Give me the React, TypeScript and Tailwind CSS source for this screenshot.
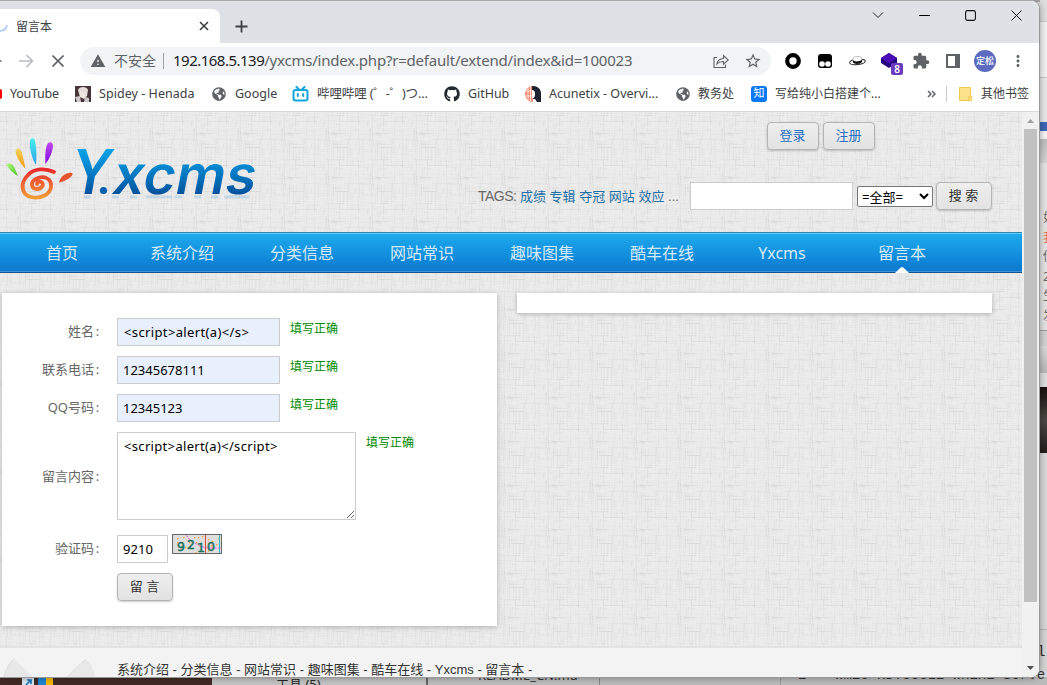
import type { ReactNode } from "react";
import { FaGithub, FaGlobeAmericas } from "react-icons/fa";
import { MdExtension, MdStarBorder, MdWarning, MdMoreVert } from "react-icons/md";

function seeded(seed: number) {
  let s = seed;
  return () => {
    s = (s * 16807) % 2147483647;
    return s / 2147483647;
  };
}

const rand = seeded(4711);
const threads = Array.from({ length: 130 }, (_, i) => {
  const vertical = i % 2 === 0;
  const len = 5 + Math.floor(rand() * 18);
  return {
    x: Math.floor(rand() * 44),
    y: Math.floor(rand() * 44),
    w: vertical ? 1 : len,
    h: vertical ? len : 1,
    fill: rand() > 0.45 ? "#ffffff" : "#b0b0b0",
    o: 0.05 + rand() * 0.09,
  };
});

function Linen() {
  return (
    <svg className="absolute inset-0 h-full w-full" aria-hidden="true">
      <defs>
        <pattern id="linen" width="44" height="44" patternUnits="userSpaceOnUse" x="16">
          <rect width="44" height="44" fill="#eaeaea" />
          {threads.map((t, i) => (
            <g key={i} fill={t.fill} opacity={t.o}>
              <rect x={t.x} y={t.y} width={t.w} height={t.h} />
              <rect x={t.x - 44} y={t.y} width={t.w} height={t.h} />
              <rect x={t.x} y={t.y - 44} width={t.w} height={t.h} />
            </g>
          ))}
        </pattern>
      </defs>
      <rect width="100%" height="100%" fill="url(#linen)" />
    </svg>
  );
}

function TabStrip() {
  return (
    <div className="flex h-[42px] shrink-0 items-end bg-[#dee1e6]">
      <div className="flex h-[34px] w-[220px] items-center rounded-tr-lg bg-white">
        <svg className="h-5 w-[16px]" viewBox="0 0 16 20" fill="none">
          <path d="M7 9c-.6 3.500-3 5.800-7 6" stroke="#a9c8fa" strokeWidth="1.600" />
        </svg>
        <span className="pt-px text-[12px] text-[#3c4043]">留言本</span>
        <svg className="ml-auto mr-[11px] h-[10px] w-[10px]" viewBox="0 0 10 10">
          <path d="M1 1l8 8M9 1l-8 8" stroke="#3c4043" strokeWidth="1.600" />
        </svg>
      </div>
      <svg className="mb-[10px] ml-[15px] h-[13px] w-[13px]" viewBox="0 0 13 13">
        <path d="M6.500 .5v12M.5 6.500h12" stroke="#3c4043" strokeWidth="1.800" />
      </svg>
      <div className="ml-auto mb-[22px] flex items-center gap-[35px] pr-[17px]">
        <svg className="h-3 w-3" viewBox="0 0 12 12" fill="none" stroke="#222">
          <path d="M1 3.500l5 5 5-5" />
        </svg>
        <svg className="h-3 w-[11px]" viewBox="0 0 11 12" stroke="#000">
          <path d="M0 6.500h11" />
        </svg>
        <svg className="h-[11px] w-[11px]" viewBox="0 0 11 11" fill="none" stroke="#111" strokeWidth="1.100">
          <rect x=".6" y=".6" width="9.800" height="9.800" rx="1.800" />
        </svg>
        <svg className="h-[11px] w-[11px]" viewBox="0 0 11 11" stroke="#111">
          <path d="M.5 .5l10 10M10.500 .5l-10 10" />
        </svg>
      </div>
    </div>
  );
}

function Toolbar() {
  return (
    <div className="flex h-[36px] shrink-0 items-center bg-white">
      <svg className="h-4 w-[35px]" viewBox="0 0 35 16" fill="none" strokeWidth="1.600">
        <path d="M0 8h1.500" stroke="#5f6368" />
        <path d="M19 8h13M26.500 2l6 6-6 6" stroke="#babcbe" />
      </svg>
      <svg className="ml-[17px] h-3 w-3" viewBox="0 0 12 12" stroke="#5f6368" strokeWidth="1.600">
        <path d="M.5 .5l11 11M11.500 .5l-11 11" />
      </svg>
      <div className="ml-[16px] flex h-[28px] w-[691px] items-center rounded-full bg-[#f1f3f4] pl-[10px] pr-[9px] text-[14px] whitespace-nowrap">
        <MdWarning className="h-4 w-4 shrink-0 text-[#5f6368]" />
        <span className="ml-[8px] pb-[2px] text-[#5f6368]">不安全</span>
        <span className="mx-[7px] h-4 w-px bg-[#9aa0a6]" />
        <span className="ml-[2px] pb-[2px] text-[15px] tracking-[-0.210px] text-[#5f6368]">
          <span className="tracking-[-0.510px] text-[#202124]">192.168.5.139</span>/yxcms/index.php?r=default/extend/index&amp;id=100023
        </span>
        <svg className="ml-auto h-4 w-4 shrink-0" viewBox="0 0 16 16" fill="none" stroke="#5f6368" strokeWidth="1.100">
          <path d="M4 4.500H1v10h11.500v-3" />
          <path d="M4 11c.3-3.500 3-5.300 6.500-5.500V2.500L15.300 7l-4.800 4.200V8.500C8 8.400 5.700 9 4 11z" />
        </svg>
        <MdStarBorder className="ml-[15px] h-[18px] w-[18px] shrink-0 text-[#5f6368]" />
      </div>
      <div className="flex flex-1 items-center">
        <svg className="ml-[14px] h-4 w-4" viewBox="0 0 16 16">
          <circle cx="8" cy="8" r="5.800" fill="none" stroke="#000" strokeWidth="4.200" />
        </svg>
        <svg className="ml-[16px] h-4 w-4" viewBox="0 0 16 16">
          <rect x="1" y="1" width="14" height="14" rx="3" fill="#000" />
          <circle cx="5" cy="11" r="2.800" fill="#fff" />
          <circle cx="11" cy="11" r="2.800" fill="#fff" />
        </svg>
        <svg className="ml-[16px] h-4 w-[17px]" viewBox="0 0 17 16">
          <ellipse cx="8.500" cy="9" rx="7.800" ry="2.600" fill="#fff" stroke="#222" transform="rotate(-6 8 9)" />
          <path d="M4 9V5c1-2 7-2 8.500-.5l.5 4C11 11 6 11 4 9z" fill="#fff" stroke="#999" strokeWidth=".6" />
          <path d="M4 7.500c3 1.500 6 1 9-.6v2.200C11 11.500 6 11.500 4 9.500z" fill="#111" />
        </svg>
        <div className="relative ml-[14px] h-5 w-[22px]">
          <svg className="h-5 w-[18px]" viewBox="0 0 18 20">
            <path d="M9 2l8 5v5l-8 5-8-5V7z" fill="#280680" />
            <path d="M9 2l8 5-8 5.500L1 7z" fill="#4b0db5" />
          </svg>
          <span className="absolute left-[11px] top-[12px] h-[12px] w-[12px] rounded-[2px] bg-[#6c3bc0] text-center text-[10px] font-semibold leading-[12px] text-white">8</span>
        </div>
        <MdExtension className="ml-[10px] h-[18px] w-[18px] text-[#5f6368]" />
        <svg className="ml-[16px] h-[14px] w-[14px]" viewBox="0 0 14 14">
          <path d="M1 1h12v12H1zM10 1v12" fill="none" stroke="#5f6368" strokeWidth="2" />
          <rect x="9" y="1" width="4" height="12" fill="#5f6368" />
        </svg>
        <span className="ml-[14px] flex h-[22px] w-[22px] items-center justify-center rounded-full bg-[#5c6bc0] text-[9px] font-medium text-white">定松</span>
        <MdMoreVert className="ml-[13px] h-[18px] w-[18px] text-[#5f6368]" />
      </div>
    </div>
  );
}

function Mark({ icon, className, children }: { icon: ReactNode; className: string; children: ReactNode }) {
  return (
    <div className={"flex shrink-0 items-center overflow-hidden whitespace-nowrap " + className}>
      {icon}
      {children}
    </div>
  );
}

function Bookmarks() {
  return (
    <div className="flex h-[33px] shrink-0 items-center border-b border-[#d8dadd] bg-white pb-[3px] text-[12.500px] text-[#3c4043]">
      <Mark className="w-[74px]" icon={<span className="mr-[8px] h-[10px] w-[2px] rounded-r bg-[#f00]" />}>
        <span className="pt-px tracking-[-0.250px]">YouTube</span>
      </Mark>
      <Mark
        className="w-[136px]"
        icon={
          <svg className="ml-px mr-[8px] h-4 w-4" viewBox="0 0 16 16">
            <rect width="16" height="16" fill="#49343c" />
            <path d="M3 4c1-4 9-4 10 0l-1 6-3 3-4-2z" fill="#e6dedb" />
            <path d="M0 11l5-1 1 6H2zM10 11l4 1v4H9z" fill="#cfcaca" />
            <path d="M5 5l2 3 1-3 1 4 2-3v4l-3 2-3-2z" fill="#f6e9df" />
          </svg>
        }
      >
        <span className="pt-px tracking-[0.050px]">Spidey - Henada</span>
      </Mark>
      <Mark className="w-[82px]" icon={<FaGlobeAmericas className="ml-[2px] mr-[9px] h-[14px] w-[14px] text-[#5f6368]" />}>
        <span className="pt-px">Google</span>
      </Mark>
      <Mark
        className="w-[152px]"
        icon={
          <svg className="mr-[8px] h-4 w-[17px]" viewBox="0 0 17 16" fill="none" stroke="#12a5dc" strokeWidth="2">
            <rect x="1.500" y="4" width="14" height="10.500" rx="2" />
            <path d="M4.500 1l2.500 2.500M12.500 1L10 3.500M5.800 8v2M11.200 8v2" strokeLinecap="round" />
          </svg>
        }
      >
        <span className="pt-px tracking-[-0.120px]">哔哩哔哩 (゜-゜)つ...</span>
      </Mark>
      <Mark className="w-[81px]" icon={<FaGithub className="mr-[8px] h-4 w-4 text-[#24292f]" />}>
        <span className="pt-px tracking-[-0.050px]">GitHub</span>
      </Mark>
      <Mark
        className="w-[150px]"
        icon={
          <svg className="mr-[8px] h-4 w-4" viewBox="0 0 16 16">
            <path d="M8 0a8 8 0 0 0 0 16z" fill="#f58a74" />
            <path d="M3 2v12M5.500 1v14M0 5h8M0 10h8" stroke="#fff" strokeWidth=".7" />
            <path d="M7 0c5-.5 9 3 9 7v9h-4l-2-3H7V9c2-1 2-4 0-5z" fill="#1f2230" />
            <path d="M7 4c2 0 3 1 3 4s-1 4-3 5z" fill="#fff" />
          </svg>
        }
      >
        <span className="pt-px">Acunetix - Overvi...</span>
      </Mark>
      <Mark className="w-[75px]" icon={<FaGlobeAmericas className="ml-px mr-[8px] h-[14px] w-[14px] text-[#5f6368]" />}>
        <span className="pt-px text-[12px]">教务处</span>
      </Mark>
      <Mark
        className="w-[170px]"
        icon={<span className="ml-px mr-[8px] flex h-4 w-4 items-center justify-center rounded-[3px] bg-[#0a78f5] text-[11px] text-white">知</span>}
      >
        <span className="pt-px text-[12px]">写给纯小白搭建个...</span>
      </Mark>
      <svg className="ml-[7px] h-[8px] w-[9px]" viewBox="0 0 9 8" fill="none" stroke="#5f6368" strokeWidth="1.500">
        <path d="M1 1l3 3-3 3M5 1l3 3-3 3" />
      </svg>
      <span className="ml-[10px] h-4 w-px bg-[#ccc]" />
      <svg className="ml-[12px] mr-[9px] h-[14px] w-[13px]" viewBox="0 0 13 14">
        <path d="M.5 .5h11v9h1v4H.5z" fill="#fde18b" stroke="#eec951" />
        <path d="M9.500 13v-3h2" fill="none" stroke="#eec951" />
      </svg>
      <span className="pt-px text-[12px]">其他书签</span>
    </div>
  );
}

function Logo() {
  return (
    <svg className="h-[70px] w-[258px]" viewBox="0 135 258 70">
      <defs>
        <linearGradient id="ink" gradientUnits="userSpaceOnUse" x1="0" y1="-45" x2="0" y2="1">
          <stop offset="0" stopColor="#0aa2e8" />
          <stop offset=".3" stopColor="#068ed6" />
          <stop offset="1" stopColor="#04509c" />
        </linearGradient>
        <linearGradient id="palm" x1="0" y1="0" x2="0" y2="1">
          <stop offset="0" stopColor="#ea2a2c" />
          <stop offset="1" stopColor="#f39a35" />
        </linearGradient>
        <linearGradient id="f1" x1="0" y1="0" x2="1" y2="1"><stop stopColor="#b5f47c" /><stop offset="1" stopColor="#45c91f" /></linearGradient>
        <linearGradient id="f2" x1="0" y1="0" x2="0" y2="1"><stop stopColor="#f8d15c" /><stop offset="1" stopColor="#f09a09" /></linearGradient>
        <linearGradient id="f3" x1="0" y1="0" x2="0" y2="1"><stop stopColor="#44f0e8" /><stop offset="1" stopColor="#2e9df3" /></linearGradient>
        <linearGradient id="f4" x1="0" y1="0" x2="0" y2="1"><stop stopColor="#c14af0" /><stop offset="1" stopColor="#7a08e0" /></linearGradient>
      </defs>
      <path d="M7 164c2-2 6 0 7 3l4 9c-4-2-12-9-11-12z" fill="url(#f1)" />
      <path d="M16 150c2-3 5-1 6 3l3.500 15.500C22 166 14 154 16 150z" fill="url(#f2)" />
      <path d="M30 141c1-4 5-3 5 0 1.500 7 2 14 1 24-4-6-7-18-6-24z" fill="url(#f3)" />
      <path d="M48 143c3-2 5 0 5 3-.5 6-3 12-7.500 18-.5-8-.5-16 2.500-21z" fill="url(#f4)" />
      <path d="M59 182.500c1-6 8-11 13-9.500 2 1-1 4-4 6-3 1.800-6 3-9 3.500z" fill="#e5532c" />
      <path
        d="M54 172c-8-4-20-4-26 3-9 9-6 20 3 22 9 2 19-2 20-10 1-9-8-12-15-8-6 3-5 10 1 10 5 0 8-5 4-7-2-1-4 0-4 2"
        fill="none" stroke="url(#palm)" strokeWidth="3.800" strokeLinecap="round"
      />
      <g fill="url(#ink)" fontFamily="Inter, sans-serif" fontWeight="600">
        <text fontSize="62" textLength="40" lengthAdjust="spacingAndGlyphs" transform="translate(68 194) skewX(-10)">Y</text>
        <text fontSize="54" textLength="143" lengthAdjust="spacingAndGlyphs" transform="translate(110.500 194) skewX(-11)">xcms</text>
      </g>
      <circle cx="103.500" cy="190.500" r="3.600" fill="#0561ad" />
      <path d="M84 197h7M112 197h7M130 197h7M146 197h26M175 197h7M194 197h7M211 197h7M224 197h25" stroke="#4b9bd6" strokeWidth="3" opacity=".22" />
    </svg>
  );
}

const button =
  "flex h-[28px] items-center justify-center rounded-[4px] border border-[#b4b4b4] bg-linear-to-b from-[#eeeeee] to-[#e2e2e2] pr-px text-[13px] shadow-[0_1px_2px_rgba(0,0,0,0.2)]";

function Header() {
  return (
    <header className="flex h-[120px] justify-between">
      <div className="pt-[23px]">
        <Logo />
      </div>
      <div className="flex flex-col pt-[10px]">
        <div className="ml-[289px] flex gap-[4px]">
          <button className={button + " w-[52px] text-[#2470c4]"}>登录</button>
          <button className={button + " w-[52px] text-[#2470c4]"}>注册</button>
        </div>
        <div className="mt-[32px] flex w-[544px] items-center whitespace-nowrap">
          <p className="w-[212px] font-['Liberation_Sans','Noto_Sans_CJK_SC',sans-serif] text-[13px] text-[#666]">
            <span className="inline-block w-[42px] text-[14px] tracking-[-0.500px]">TAGS:</span>
            <span className="text-[#1d6fa5]">成绩 专辑 夺冠 网站 效应</span> ...
          </p>
          <input className="h-[28px] w-[163px] border border-[#ccc] bg-white" aria-label="关键词" />
          <select className="ml-[4px] h-[21px] w-[76px] rounded-[2px] border border-[#767676] bg-white pb-[2px] text-[13px] leading-none text-black">
            <option>=全部=</option>
          </select>
          <button className={button + " ml-[3px] w-[56px] text-[#333]"}>搜 索</button>
        </div>
      </div>
    </header>
  );
}

const channels = ["首页", "系统介绍", "分类信息", "网站常识", "趣味图集", "酷车在线", "Yxcms", "留言本"];

function Nav() {
  return (
    <nav className="flex h-[41px] border-y border-t-[#2b86b5] border-b-[#17548a] bg-linear-to-b from-[#1eabee] to-[#0d78cf] pl-[2px] text-[16px] text-[#d3ebf8] shadow-[inset_0_1px_0_#67c9f5,inset_0_-1px_0_#3e92d6]">
      {channels.map((c) => (
        <a key={c} className="flex w-[120px] flex-col items-center">
          <span className="leading-[40px]">{c}</span>
          {c === "留言本" && (
            <svg className="-mt-[6px] h-[6px] w-[14px] shrink-0" viewBox="0 0 14 6">
              <path d="M0 6L6 .3h2L14 6z" fill="#fff" />
            </svg>
          )}
        </a>
      ))}
    </nav>
  );
}

function Row({ label, className, children }: { label: string; className: string; children: ReactNode }) {
  return (
    <div className={"flex " + className}>
      <span className="w-[99px] text-right text-[13px] leading-[26px] text-[#666]">
        {label}
        <span className="inline-block w-[7px] text-center">:</span>
      </span>
      <div className="ml-[16px] flex">{children}</div>
    </div>
  );
}

const field = "h-[28px] border border-[#ccc] px-[5px] text-[13px] text-black";

function Correct() {
  return <span className="ml-[10px] pt-px text-[12px] leading-[20px] text-[#008a00]">填写正确</span>;
}

function Captcha() {
  return (
    <svg className="ml-[4px] -mt-px h-[20px] w-[50px]" viewBox="0 0 50 20">
      <rect x=".5" y=".5" width="49" height="19" fill="#dedede" stroke="#666" />
      <path d="M14 1l5 6 9 5 7 2h14" fill="none" stroke="#ef6fe0" strokeDasharray="3 1" />
      <path d="M33.500 1v18" stroke="#e0492c" />
      <path d="M47.500 1v18" stroke="#20bccb" />
      <g fill="#f29b3b">
        {[[5, 4], [11, 3], [10, 8], [22, 3], [26, 3], [30, 2], [24, 8], [36, 5], [40, 7], [44, 10], [39, 11], [13, 13], [46, 4], [23, 18], [36, 16], [17, 8], [5, 8]].map(([x, y]) => (
          <rect key={x + "-" + y} x={x} y={y} width="1.300" height="1.300" />
        ))}
      </g>
      <g fill="#20705c" stroke="#20705c" strokeWidth=".5" fontFamily="DejaVu Sans, sans-serif" fontSize="12.500">
        <text x="5" y="17">9</text>
        <text x="15" y="14.500">2</text>
        <text x="25" y="18">1</text>
        <text x="35" y="17">0</text>
      </g>
    </svg>
  );
}

function Guestbook() {
  return (
    <form className="h-[333px] w-[495px] bg-white pt-[25px] shadow-[0_1px_5px_rgba(0,0,0,0.25)]">
      <Row label="姓名" className="h-[38px]">
        <input className={field + " w-[163px] bg-[#e8f0fe] pl-[6px] tracking-[0.370px]"} defaultValue="<script>alert(a)</s>" />
        <Correct />
      </Row>
      <Row label="联系电话" className="h-[38px]">
        <input className={field + " w-[163px] bg-[#e8f0fe]"} defaultValue="12345678111" />
        <Correct />
      </Row>
      <Row label="QQ号码" className="h-[38px]">
        <input className={field + " w-[163px] bg-[#e8f0fe]"} defaultValue="12345123" />
        <Correct />
      </Row>
      <Row label="留言内容" className="h-[103px] [&>span]:pt-[31px]">
        <textarea
          className="h-[88px] w-[239px] overflow-hidden border border-[#ccc] px-[6px] py-[4px] text-[13px] leading-[18px] tracking-[0.330px] text-black"
          defaultValue="<script>alert(a)</script>"
        />
        <Correct />
      </Row>
      <Row label="验证码" className="h-[38px]">
        <input className={field + " w-[51px] tracking-[0.100px]"} defaultValue="9210" />
        <Captcha />
      </Row>
      <button type="button" className={button + " ml-[115px] w-[56px] text-[#333]"}>留 言</button>
    </form>
  );
}

function Footer() {
  return (
    <footer className="mt-[20px] flex h-[31px] overflow-hidden border-t-2 border-[#e3e3e3] bg-[#f3f3f3]">
      <svg className="h-[29px] w-[117px]" viewBox="0 0 117 29">
        <path d="M4 29c2-8 5-13 10-18l19 18zM67 29l19-18c5 5 8 10 9 18z" fill="#e8e8e8" />
        <path d="M4 29c2-8 5-13 10-18M67 29l19-18" stroke="#ddd" fill="none" />
      </svg>
      <p className="pt-[12px] font-['Liberation_Sans','Noto_Sans_CJK_SC',sans-serif] text-[13px] leading-[20px] whitespace-nowrap text-[#333]">
        系统介绍 - 分类信息 - 网站常识 - 趣味图集 - 酷车在线 - Yxcms - 留言本 -
      </p>
    </footer>
  );
}

function Scrollbar() {
  return (
    <div className="flex w-[17px] flex-col items-center bg-[#f1f1f1]">
      <svg className="h-[17px] w-[17px]" viewBox="0 0 17 17"><path d="M5 11l3.500-4 3.500 4z" fill="#a3a3a3" /></svg>
      <div className="h-[473px] w-[13px] bg-[#c1c1c1]" />
      <svg className="mt-auto mb-px h-[17px] w-[17px]" viewBox="0 0 17 17"><path d="M5 7h7l-3.500 4z" fill="#505050" /></svg>
    </div>
  );
}

function Backdrop() {
  return (
    <div className="absolute inset-0 overflow-hidden bg-[#e2e2e2]">
      <div className="absolute left-0 top-0 flex h-[2px] w-full">
        <div className="w-[24px] bg-[#777]" />
        <div className="w-[28px] bg-[#b9a55a]" />
        <div className="w-[46px] bg-[#7b6d68]" />
        <div className="w-[32px] bg-[#3d83ad]" />
        <div className="w-[380px] bg-[#806860]" />
        <div className="w-[91px] bg-[#37302f]" />
        <div className="w-[7px] bg-[#aaa]" />
        <div className="w-[17px] bg-[#42a058]" />
        <div className="flex-1 bg-[#aaa]" />
      </div>
      <div className="absolute right-0 top-0 flex h-full w-[7px] flex-col">
        <div className="h-[22px] border-b border-[#c6c6c6] bg-[#dedede]" />
        <div className="h-[56px] border-b border-[#c6c6c6] bg-[#f0f0f0]" />
        <div className="h-[44px] bg-[#e6e6e6]" />
        <div className="h-[9px] bg-[#3b67b5]" />
        <div className="h-[8px] bg-[#f2f2f2]" />
        <div className="h-[24px] bg-linear-to-b from-[#bdbdbd] to-[#d2d2d2]" />
        <div className="flex h-[167px] flex-col overflow-hidden bg-[#e2e2e2] pl-[3px] pt-[45px] text-[12px] leading-[19.500px] text-[#666]">
          <span>如</span>
          <span className="text-[#e0683f]">我</span>
          <span>你</span>
          <span>2</span>
          <span>生</span>
          <span>发</span>
        </div>
        <div className="h-[16px] border-t border-[#999] bg-[#cfcfcf]" />
        <div className="h-[27px] bg-linear-to-b from-[#dadada] to-[#b5b5b5]" />
        <div className="h-[14px] bg-[#dcdcdc]" />
        <div className="h-[66px] bg-linear-to-b from-[#17100d] via-[#4a4844] to-[#221c1a]" />
        <div className="h-[177px] border-b border-[#b5b5b5] bg-[#d6d6d6]" />
        <div className="flex-1 bg-[#d3d3d3]" />
      </div>
      <div className="absolute bottom-0 left-0 flex h-[8px] w-full bg-[#bababa]">
        <div className="flex w-[212px] bg-[#422b26] pl-[22px]">
          <svg className="h-[8px] w-[12px]" viewBox="0 0 12 8">
            <rect width="12" height="8" fill="#d9e6ef" />
            <path d="M4 8l5-5M5 3h4v4" fill="none" stroke="#1675bb" strokeWidth="1.600" />
          </svg>
          <div className="ml-[4px] w-[15px] bg-linear-to-r from-[#1d86cf] from-50% to-[#f2b705] to-50%" />
        </div>
        <div className="w-[216px] border-r-2 border-[#666] bg-[#c2c2c2]" />
        <div className="w-[172px] border-r border-[#888] bg-[#bcbcbc]" />
        <div className="w-[181px] border-r border-[#999]" />
      </div>
      <span className="absolute left-[276px] top-[674px] text-[13px] leading-[20px] text-[#222]">工具 (5)</span>
      <span className="absolute left-[478px] top-[666px] text-[13px] leading-[18px] text-[#333]">README_CN.md</span>
      <span className="absolute left-[798px] top-[665px] font-['Liberation_Mono',monospace] text-[14px] leading-[20px] whitespace-pre text-[#333]">2</span>
      <span className="absolute left-[835px] top-[665px] font-['Liberation_Mono',monospace] text-[14px] leading-[20px] whitespace-pre text-[#333]">wmic RDTOGGLE WHERE Serve</span>
      <span className="absolute left-[1037px] top-[642px] font-['Liberation_Mono',monospace] text-[14px] leading-[20px] text-[#222]">l</span>
    </div>
  );
}

export default function App() {
  return (
    <div className="relative h-[685px] w-[1047px] overflow-hidden font-['Noto_Sans','Noto_Sans_CJK_SC',sans-serif]">
      <Backdrop />
      <div className="relative flex h-[678px] w-[1040px] flex-col overflow-hidden rounded-tr-[9px] rounded-br-[9px] border-r border-b border-[#999] border-t border-t-[#aaa] bg-white shadow-[0_0_6px_rgba(0,0,0,0.35)]">
        <TabStrip />
        <Toolbar />
        <Bookmarks />
        <div className="flex h-[565px]">
          <main className="relative w-[1022px] overflow-hidden">
            <Linen />
            <div className="relative flex flex-col">
              <Header />
              <Nav />
              <div className="mt-[20px] flex items-start gap-[20px] pl-[2px]">
                <Guestbook />
                <aside className="h-[20px] w-[475px] bg-white shadow-[0_1px_4px_rgba(0,0,0,0.25)]" />
              </div>
              <Footer />
            </div>
          </main>
          <Scrollbar />
        </div>
      </div>
    </div>
  );
}
